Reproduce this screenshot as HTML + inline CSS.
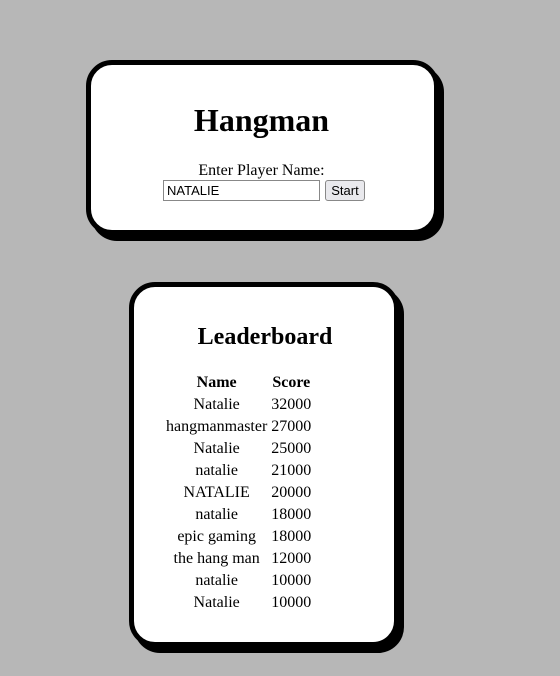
<!DOCTYPE html>
<html><head><style>
body{margin:0;width:560px;height:676px;background:#b7b7b7;font-family:"Liberation Serif",serif;position:relative;overflow:hidden}
.box{position:absolute;background:#fff;border:5px solid #000;border-radius:26px;box-shadow:5px 6px 0 #000;box-sizing:border-box}
h1{position:absolute;margin:0;left:0;right:0;text-align:center;font-weight:bold}
table{position:absolute;border-collapse:separate;border-spacing:2px 0;font-size:16px}
td,th{padding:0 1px;height:22px;text-align:center}
</style></head><body>
<div class="box" style="left:86px;top:60px;width:353px;height:175px">
<h1 style="top:37px;font-size:32px;left:-2px">Hangman</h1>
<div style="position:absolute;top:97px;left:-2px;right:0;text-align:center;font-size:16px">Enter Player Name:</div>
<div style="position:absolute;left:72px;top:115px;width:157px;height:21px;border:1px solid #888;box-sizing:border-box;font-family:'Liberation Sans',sans-serif;font-size:13px;padding:3px 3px;line-height:13px">NATALIE</div>
<div style="position:absolute;left:234px;top:115px;width:40px;height:21px;border:1px solid #888;border-radius:3px;background:#e9e9ed;box-sizing:border-box;font-family:'Liberation Sans',sans-serif;font-size:13px;text-align:center;line-height:19px">Start</div>
</div>
<div class="box" style="left:129px;top:282px;width:270px;height:365px">
<h1 style="top:37px;font-size:24px;left:2px">Leaderboard</h1>
<table style="left:29px;top:85px">
<tr><th>Name</th><th>Score</th></tr>
<tr><td>Natalie</td><td>32000</td></tr>
<tr><td>hangmanmaster</td><td>27000</td></tr>
<tr><td>Natalie</td><td>25000</td></tr>
<tr><td>natalie</td><td>21000</td></tr>
<tr><td>NATALIE</td><td>20000</td></tr>
<tr><td>natalie</td><td>18000</td></tr>
<tr><td>epic gaming</td><td>18000</td></tr>
<tr><td>the hang man</td><td>12000</td></tr>
<tr><td>natalie</td><td>10000</td></tr>
<tr><td>Natalie</td><td>10000</td></tr>
</table>
</div>
</body></html>
